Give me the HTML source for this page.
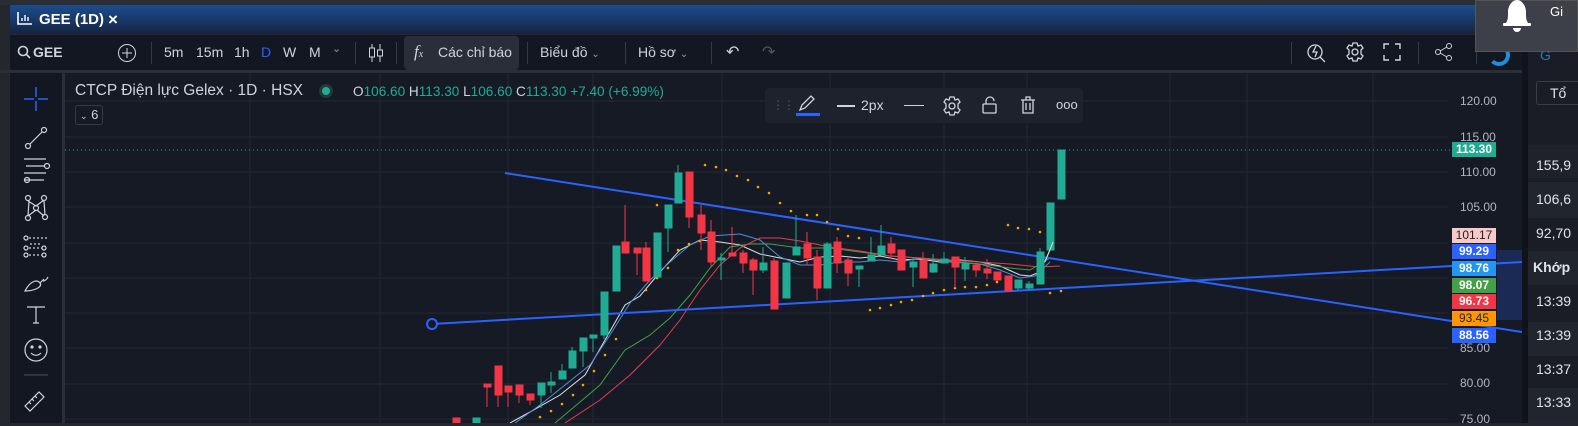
<!DOCTYPE html>
<html><head><meta charset="utf-8">
<style>
*{margin:0;padding:0;box-sizing:border-box}
body{width:1578px;height:423px;overflow:hidden;background:#24272e;font-family:"Liberation Sans","Noto Sans CJK SC",sans-serif;position:relative;color:#d1d4dc}
.abs{position:absolute}
.tb{font-size:14px;color:#d1d4dc;white-space:nowrap}
.sep{position:absolute;top:42px;width:1px;height:22px;background:#363a45}
.pl{position:absolute;left:1452px;width:44px;height:15px;font-size:12px;text-align:center;line-height:15px;color:#fff;font-weight:bold}
.ax{position:absolute;left:1460px;font-size:12px;color:#b2b5be}
.rp{position:absolute;left:1528px;width:50px;font-size:14px;color:#e0e3eb;padding-left:8px}
</style></head><body>
<!-- top strip -->
<div class="abs" style="left:0;top:0;width:1578px;height:5px;background:#2a2d33"></div>
<div class="abs" style="left:10px;top:5px;width:1512px;height:29px;background:linear-gradient(#1c4d8e,#17305a 70%,#15233d)"></div>
<svg class="abs" style="left:17px;top:11px" width="16" height="14"><path d="M1 1v12h14" fill="none" stroke="#fff" stroke-width="1.6"/><path d="M5 10V7M8 10V4M11 10V6" stroke="#fff" stroke-width="1.4"/></svg>
<div class="abs" style="left:39px;top:11px;font-size:15px;font-weight:bold;color:#fff">GEE (1D)</div>
<div class="abs" style="left:108px;top:10px;font-size:17px;font-weight:bold;color:#fff">×</div>
<!-- toolbar -->
<div class="abs" style="left:10px;top:35px;width:1512px;height:35px;background:#131722"></div>
<div class="abs" style="left:0;top:70px;width:1522px;height:3px;background:#2a2e39"></div>
<svg class="abs" style="left:17px;top:45px" width="14" height="14"><circle cx="6" cy="6" r="4.5" fill="none" stroke="#d1d4dc" stroke-width="1.6"/><line x1="9.5" y1="9.5" x2="13" y2="13" stroke="#d1d4dc" stroke-width="1.6"/></svg>
<div class="abs tb" style="left:33px;top:44px;font-weight:bold">GEE</div>
<svg class="abs" style="left:117px;top:43px" width="20" height="20"><circle cx="10" cy="10" r="8.5" fill="none" stroke="#d1d4dc"/><path d="M10 5v10M5 10h10" stroke="#d1d4dc"/></svg>
<div class="sep" style="left:151px"></div>
<div class="abs tb" style="left:164px;top:44px">5m</div>
<div class="abs tb" style="left:196px;top:44px">15m</div>
<div class="abs tb" style="left:234px;top:44px">1h</div>
<div class="abs tb" style="left:261px;top:44px;color:#2962ff">D</div>
<div class="abs tb" style="left:283px;top:44px">W</div>
<div class="abs tb" style="left:309px;top:44px">M</div>
<div class="abs tb" style="left:332px;top:42px;font-size:11px;color:#999">&#8964;</div>
<div class="sep" style="left:355px"></div>
<svg class="abs" style="left:366px;top:42px" width="20" height="22"><path d="M6 2v18M14 2v18" stroke="#d1d4dc"/><rect x="3.5" y="6" width="5" height="9" fill="#131722" stroke="#d1d4dc"/><rect x="11.5" y="8" width="5" height="6" fill="#131722" stroke="#d1d4dc"/></svg>
<div class="sep" style="left:396px"></div>
<div class="abs" style="left:404px;top:36px;width:115px;height:34px;background:#2a2e39;border-radius:4px"></div>
<div class="abs tb" style="left:414px;top:42px;font-family:'Liberation Serif',serif;font-style:italic;font-size:17px">f<span style="font-size:10px">x</span></div>
<div class="abs tb" style="left:438px;top:44px">Các chỉ báo</div>
<div class="sep" style="left:527px"></div>
<div class="abs tb" style="left:540px;top:44px">Biểu đồ <span style="font-size:10px;color:#999">&#8964;</span></div>
<div class="sep" style="left:625px"></div>
<div class="abs tb" style="left:638px;top:44px">Hồ sơ <span style="font-size:10px;color:#999">&#8964;</span></div>
<div class="sep" style="left:711px"></div>
<div class="abs tb" style="left:726px;top:42px;font-size:16px">&#8630;</div>
<div class="abs tb" style="left:762px;top:42px;font-size:16px;color:#555">&#8631;</div>
<div class="sep" style="left:1291px"></div>
<svg class="abs" style="left:1305px;top:41px" width="22" height="24"><circle cx="10" cy="11" r="7" fill="none" stroke="#d1d4dc" stroke-width="1.3"/><path d="M15 16l5 5M11 5l-3 6h4l-2 5" stroke="#d1d4dc" stroke-width="1.3" fill="none"/></svg>
<svg class="abs" style="left:1344px;top:41px" width="22" height="22"><circle cx="11" cy="11" r="3" fill="none" stroke="#d1d4dc" stroke-width="1.3"/><path d="M9 2h4l1 3 3-1 2 3-2 2v4l2 2-2 3-3-1-1 3h-4l-1-3-3 1-2-3 2-2v-4l-2-2 2-3 3 1z" fill="none" stroke="#d1d4dc" stroke-width="1.3"/></svg>
<svg class="abs" style="left:1383px;top:43px" width="18" height="18"><path d="M1 6V1h5M12 1h5v5M17 12v5h-5M6 17H1v-5" fill="none" stroke="#d1d4dc" stroke-width="1.4"/></svg>
<div class="sep" style="left:1418px"></div>
<svg class="abs" style="left:1434px;top:42px" width="20" height="20"><circle cx="15" cy="4" r="2.5" fill="none" stroke="#d1d4dc"/><circle cx="4" cy="10" r="2.5" fill="none" stroke="#d1d4dc"/><circle cx="15" cy="16" r="2.5" fill="none" stroke="#d1d4dc"/><path d="M6 9l7-4M6 11l7 4" stroke="#d1d4dc"/></svg>
<div class="sep" style="left:1476px"></div>
<div class="abs" style="left:1488px;top:44px;width:22px;height:22px;border-radius:50%;border:4px solid #1f8ee0;border-left-color:transparent"></div>
<!-- left toolbar -->
<div class="abs" style="left:10px;top:73px;width:52px;height:350px;background:#131722"></div>
<div class="abs" style="left:62px;top:73px;width:3px;height:350px;background:#2a2e39"></div>
<svg class="abs" style="left:10px;top:73px" width="52" height="350" fill="none" stroke="#d1d4dc" stroke-width="1.2">
<path d="M26 14v10M26 28v10M14 26h10M28 26h10" stroke="#2962ff" stroke-width="1.5"/>
<circle cx="18" cy="73" r="2.5"/><circle cx="34" cy="57" r="2.5"/><path d="M20 71l12-12"/>
<path d="M14 86h22M16 93h18M14 100h22M14 107h20"/><circle cx="37" cy="93" r="2.5"/><circle cx="17" cy="107" r="2.5"/>
<circle cx="18" cy="125" r="2.5"/><circle cx="34" cy="125" r="2.5"/><circle cx="26" cy="135" r="2.5"/><circle cx="18" cy="145" r="2.5"/><circle cx="35" cy="144" r="2.5"/><path d="M18 128l8 5 8-6M26 137l-8 6M27 137l7 6M19 128l-1 15M34 128l1 14"/>
<circle cx="16" cy="165" r="2"/><circle cx="16" cy="175" r="2"/><circle cx="16" cy="182" r="2"/><circle cx="34" cy="175" r="2"/><circle cx="34" cy="182" r="2"/><path d="M19 165h18M19 175h13M19 182h13M20 171h12" stroke-dasharray="2 2"/>
<path d="M15 218c5-10 12-12 15-8s-6 8-15 8zM30 210l4-4M33 208c2 0 4-2 5-4"/>
<path d="M17 234h18M26 234v16M23 250h6"/>
<circle cx="26" cy="277" r="11"/><circle cx="22" cy="274" r="1" fill="#d1d4dc"/><circle cx="30" cy="274" r="1" fill="#d1d4dc"/><path d="M21 280c3 3 7 3 10 0"/>
<path d="M14 302h24" stroke="#434651"/>
<path d="M15 333l14-14 5 5-14 14zM19 329l2 2M22 326l2 2M25 323l2 2"/>
</svg>
<!-- chart -->
<div class="abs" style="left:65px;top:73px;width:1457px;height:350px;background:#161a25"></div>
<div class="abs" style="left:1522px;top:35px;width:6px;height:388px;background:#101318"></div>
<svg class="abs" style="left:0;top:0" width="1522" height="423">
<g stroke="#242832" stroke-width="1">
<path d="M65 101H1448M65 137H1448M65 172H1448M65 207H1448M65 243H1448M65 278H1448M65 313H1448M65 348H1448M65 384H1448M65 419H1448"/>
<path d="M250 73V423M380 73V423M508 73V423M593 73V423M722 73V423M830 73V423M944 73V423M1027 73V423M1170 73V423M1247 73V423M1373 73V423"/>
</g>
<rect x="1497" y="250" width="25" height="70" fill="#1a2a55"/>
<line x1="65" y1="150" x2="1452" y2="150" stroke="#22ab94" stroke-dasharray="1 3"/>
<polyline fill="none" stroke="#e0e0e0" stroke-width="1" points="510,423 530,412 560,395 585,375 605,340 625,305 640,296 660,272 680,250 700,240 720,242 740,245 760,254 780,258 800,262 820,257 840,256 860,258 880,256 900,260 920,259 940,262 960,260 980,262 1000,266 1020,275 1030,276 1040,272 1050,250"/>
<polyline fill="none" stroke="#4f8fd6" stroke-width="1" points="515,423 540,405 565,385 590,365 610,335 630,303 650,280 670,262 690,245 710,236 740,234 760,240 780,257 800,265 820,265 840,262 860,262 880,260 900,262 920,258 950,262 980,264 1000,270 1020,278 1035,276 1050,262"/>
<polyline fill="none" stroke="#43a047" stroke-width="1" points="555,423 580,402 600,385 625,350 650,335 670,318 690,295 710,268 730,247 750,244 770,244 800,248 830,248 860,252 890,256 920,258 950,261 980,264 1010,268 1030,270 1050,258"/>
<polyline fill="none" stroke="#e04050" stroke-width="1" points="565,423 600,400 630,375 660,345 680,320 700,290 720,265 740,248 760,238 780,238 800,241 830,247 860,251 890,256 920,258 950,260 980,262 1010,264 1040,267 1060,266"/>
<line x1="505" y1="173" x2="1522" y2="332" stroke="#2962ff" stroke-width="2"/>
<line x1="432" y1="324" x2="1522" y2="262" stroke="#2962ff" stroke-width="2"/>
<circle cx="432" cy="324" r="5" fill="#161a25" stroke="#2962ff" stroke-width="2"/>
<g fill="#f7a600">
<circle cx="540" cy="417" r="1.3"/><circle cx="551" cy="411" r="1.3"/><circle cx="562" cy="404" r="1.3"/><circle cx="573" cy="395" r="1.3"/><circle cx="583" cy="385" r="1.3"/><circle cx="594" cy="371" r="1.3"/><circle cx="605" cy="355" r="1.3"/><circle cx="616" cy="339" r="1.3"/><circle cx="646" cy="290" r="1.3"/><circle cx="657" cy="278" r="1.3"/><circle cx="668" cy="268" r="1.3"/><circle cx="678" cy="250" r="1.3"/><circle cx="689" cy="244" r="1.3"/><circle cx="700" cy="241" r="1.3"/><circle cx="710" cy="236" r="1.3"/><circle cx="657" cy="205" r="1.3"/>
<circle cx="705" cy="165" r="1.3"/><circle cx="716" cy="167" r="1.3"/><circle cx="726" cy="170" r="1.3"/><circle cx="737" cy="176" r="1.3"/><circle cx="748" cy="180" r="1.3"/><circle cx="758" cy="187" r="1.3"/><circle cx="769" cy="193" r="1.3"/><circle cx="780" cy="203" r="1.3"/><circle cx="791" cy="211" r="1.3"/><circle cx="807" cy="215" r="1.3"/><circle cx="817" cy="215" r="1.3"/><circle cx="827" cy="222" r="1.3"/><circle cx="838" cy="229" r="1.3"/><circle cx="848" cy="236" r="1.3"/><circle cx="859" cy="238" r="1.3"/>
<circle cx="870" cy="310" r="1.3"/><circle cx="880" cy="308" r="1.3"/><circle cx="891" cy="305" r="1.3"/><circle cx="901" cy="302" r="1.3"/><circle cx="912" cy="300" r="1.3"/><circle cx="923" cy="296" r="1.3"/><circle cx="933" cy="293" r="1.3"/><circle cx="944" cy="290" r="1.3"/><circle cx="955" cy="288" r="1.3"/><circle cx="965" cy="287" r="1.3"/><circle cx="976" cy="287" r="1.3"/><circle cx="987" cy="285" r="1.3"/><circle cx="997" cy="282" r="1.3"/>
<circle cx="1008" cy="225" r="1.3"/><circle cx="1018" cy="228" r="1.3"/><circle cx="1029" cy="229" r="1.3"/><circle cx="1040" cy="232" r="1.3"/><circle cx="1050" cy="293" r="1.3"/><circle cx="1061" cy="291" r="1.3"/>
</g>
<g stroke-width="1">
<g fill="#f23645" stroke="#f23645">
<rect x="453" y="418" width="7" height="5"/>
<line x1="487" y1="384" x2="487" y2="407"/><rect x="484" y="384" width="7" height="3"/>
<line x1="498" y1="366" x2="498" y2="407"/><rect x="495" y="366" width="7" height="29"/>
<line x1="508" y1="386" x2="508" y2="407"/><rect x="505" y="386" width="7" height="6"/>
<line x1="519" y1="385" x2="519" y2="403"/><rect x="516" y="385" width="7" height="10"/>
<line x1="530" y1="394" x2="530" y2="405"/><rect x="527" y="394" width="7" height="6"/>
<line x1="625" y1="205" x2="625" y2="253"/><rect x="622" y="242" width="7" height="11"/>
<line x1="637" y1="248" x2="637" y2="275"/><rect x="634" y="248" width="7" height="5"/>
<line x1="646" y1="242" x2="646" y2="281"/><rect x="643" y="248" width="7" height="33"/>
<line x1="689" y1="172" x2="689" y2="228"/><rect x="686" y="172" width="7" height="45"/>
<line x1="701" y1="205" x2="701" y2="250"/><rect x="698" y="215" width="7" height="18"/>
<line x1="711" y1="220" x2="711" y2="267"/><rect x="708" y="232" width="7" height="30"/>
<line x1="732" y1="227" x2="732" y2="256"/><rect x="729" y="253" width="7" height="3"/>
<line x1="743" y1="250" x2="743" y2="273"/><rect x="740" y="253" width="7" height="10"/>
<line x1="753" y1="258" x2="753" y2="295"/><rect x="750" y="260" width="7" height="10"/>
<line x1="774" y1="258" x2="774" y2="309"/><rect x="771" y="261" width="7" height="48"/>
<line x1="807" y1="232" x2="807" y2="265"/><rect x="804" y="244" width="7" height="14"/>
<line x1="817" y1="250" x2="817" y2="300"/><rect x="814" y="257" width="7" height="31"/>
<line x1="837" y1="237" x2="837" y2="273"/><rect x="834" y="242" width="7" height="21"/>
<line x1="848" y1="258" x2="848" y2="286"/><rect x="845" y="260" width="7" height="13"/>
<line x1="891" y1="237" x2="891" y2="259"/><rect x="888" y="244" width="7" height="9"/>
<line x1="901" y1="250" x2="901" y2="270"/><rect x="898" y="250" width="7" height="20"/>
<line x1="923" y1="252" x2="923" y2="278"/><rect x="920" y="260" width="7" height="18"/>
<line x1="955" y1="257" x2="955" y2="288"/><rect x="952" y="257" width="7" height="10"/>
<line x1="976" y1="265" x2="976" y2="277"/><rect x="973" y="265" width="7" height="5"/>
<line x1="987" y1="259" x2="987" y2="279"/><rect x="984" y="269" width="7" height="4"/>
<line x1="997" y1="272" x2="997" y2="280"/><rect x="994" y="272" width="7" height="8"/>
<line x1="1008" y1="276" x2="1008" y2="291"/><rect x="1005" y="276" width="7" height="15"/>
</g>
<g fill="#22ab94" stroke="#22ab94">
<rect x="473" y="418" width="7" height="5"/>
<line x1="541" y1="383" x2="541" y2="408"/><rect x="538" y="383" width="7" height="12"/>
<line x1="551" y1="372" x2="551" y2="393"/><rect x="548" y="382" width="7" height="3"/>
<line x1="562" y1="364" x2="562" y2="379"/><rect x="559" y="371" width="7" height="8"/>
<line x1="572" y1="347" x2="572" y2="368"/><rect x="569" y="351" width="7" height="17"/>
<line x1="583" y1="338" x2="583" y2="367"/><rect x="580" y="338" width="7" height="13"/>
<line x1="593" y1="335" x2="593" y2="352"/><rect x="590" y="335" width="7" height="3"/>
<line x1="604" y1="292" x2="604" y2="339"/><rect x="601" y="292" width="7" height="43"/>
<line x1="616" y1="246" x2="616" y2="291"/><rect x="613" y="246" width="7" height="45"/>
<line x1="657" y1="233" x2="657" y2="277"/><rect x="654" y="233" width="7" height="44"/>
<line x1="668" y1="205" x2="668" y2="252"/><rect x="665" y="205" width="7" height="23"/>
<line x1="678" y1="165" x2="678" y2="203"/><rect x="675" y="173" width="7" height="30"/>
<line x1="721" y1="253" x2="721" y2="280"/><rect x="718" y="258" width="7" height="2"/>
<line x1="763" y1="247" x2="763" y2="273"/><rect x="760" y="263" width="7" height="7"/>
<line x1="786" y1="263" x2="786" y2="298"/><rect x="783" y="263" width="7" height="35"/>
<line x1="796" y1="215" x2="796" y2="255"/><rect x="793" y="247" width="7" height="8"/>
<line x1="827" y1="242" x2="827" y2="288"/><rect x="824" y="244" width="7" height="44"/>
<line x1="859" y1="266" x2="859" y2="287"/><rect x="856" y="266" width="7" height="3"/>
<line x1="871" y1="237" x2="871" y2="261"/><rect x="868" y="255" width="7" height="6"/>
<line x1="881" y1="225" x2="881" y2="255"/><rect x="878" y="246" width="7" height="9"/>
<line x1="913" y1="257" x2="913" y2="287"/><rect x="910" y="262" width="7" height="5"/>
<line x1="933" y1="254" x2="933" y2="273"/><rect x="930" y="264" width="7" height="8"/>
<line x1="944" y1="252" x2="944" y2="263"/><rect x="941" y="259" width="7" height="4"/>
<line x1="965" y1="257" x2="965" y2="281"/><rect x="962" y="264" width="7" height="5"/>
<line x1="1018" y1="280" x2="1018" y2="290"/><rect x="1015" y="280" width="7" height="8"/>
<line x1="1029" y1="281" x2="1029" y2="290"/><rect x="1026" y="284" width="7" height="4"/>
<line x1="1040" y1="248" x2="1040" y2="284"/><rect x="1037" y="252" width="7" height="32"/>
<rect x="1047" y="203" width="7" height="47"/>
<rect x="1058" y="150" width="7" height="49"/>
</g>
<polyline fill="none" stroke="#e0e0e0" points="1045,262 1053,242"/>
</g>
</svg>
<!-- legend -->
<div class="abs" style="left:75px;top:82px;font-size:15.5px;color:#d1d4dc">CTCP Điện lực Gelex · 1D · HSX</div>
<div class="abs" style="left:322px;top:87px;width:8px;height:8px;border-radius:50%;background:#22ab94;box-shadow:0 0 0 3px #1f3b36"></div>
<div class="abs" style="left:353px;top:84px;font-size:13.6px;color:#d1d4dc">O<span style="color:#22ab94">106.60</span> H<span style="color:#22ab94">113.30</span> L<span style="color:#22ab94">106.60</span> C<span style="color:#22ab94">113.30</span> <span style="color:#22ab94">+7.40 (+6.99%)</span></div>
<div class="abs" style="left:75px;top:105px;width:28px;height:20px;border:1px solid #363a45;border-radius:3px;font-size:13px;line-height:18px;padding-left:4px;color:#d1d4dc"><span style="font-size:9px">&#8964;</span> 6</div>
<!-- floating drawing toolbar -->
<div class="abs" style="left:765px;top:88px;width:318px;height:35px;background:#1e222d;border-radius:4px"></div>
<div class="abs" style="left:772px;top:98px;font-size:12px;color:#555;letter-spacing:-1px">⋮⋮</div>
<svg class="abs" style="left:796px;top:93px" width="24" height="24"><path d="M4 17l2-5 9-9 3 3-9 9z" fill="none" stroke="#d1d4dc" stroke-width="1.3"/><rect x="0" y="20" width="24" height="3" fill="#2962ff"/></svg>
<div class="abs" style="left:837px;top:105px;width:18px;height:2px;background:#d1d4dc"></div>
<div class="abs" style="left:861px;top:97px;font-size:14px;color:#d1d4dc">2px</div>
<div class="abs" style="left:904px;top:105px;width:20px;height:1px;background:#d1d4dc"></div>
<svg class="abs" style="left:942px;top:96px" width="20" height="20"><circle cx="10" cy="10" r="3" fill="none" stroke="#d1d4dc" stroke-width="1.3"/><path d="M8 1h4l1 3 3-1 2 3-2 2v4l2 2-2 3-3-1-1 3h-4l-1-3-3 1-2-3 2-2v-4l-2-2 2-3 3 1z" fill="none" stroke="#d1d4dc" stroke-width="1.3"/></svg>
<svg class="abs" style="left:980px;top:95px" width="20" height="20"><rect x="3" y="9" width="13" height="9" rx="1" fill="none" stroke="#d1d4dc" stroke-width="1.3"/><path d="M6 9V6a4 4 0 0 1 8 0" fill="none" stroke="#d1d4dc" stroke-width="1.3"/></svg>
<svg class="abs" style="left:1018px;top:95px" width="20" height="20"><path d="M3 5h14M8 5V2h4v3M5 5v13h10V5M8 8v7M12 8v7" fill="none" stroke="#d1d4dc" stroke-width="1.3"/></svg>
<div class="abs" style="left:1056px;top:97px;font-size:13px;color:#d1d4dc">ooo</div>
<!-- axis -->
<div class="ax" style="top:94px">120.00</div>
<div class="ax" style="top:130px">115.00</div>
<div class="ax" style="top:165px">110.00</div>
<div class="ax" style="top:200px">105.00</div>
<div class="ax" style="top:341px">85.00</div>
<div class="ax" style="top:376px">80.00</div>
<div class="ax" style="top:412px">75.00</div>
<div class="pl" style="top:142px;background:#22ab94">113.30</div>
<div class="pl" style="top:228px;background:#f8c9c9;color:#222;font-weight:normal">101.17</div>
<div class="pl" style="top:244px;background:#2962ff">99.29</div>
<div class="pl" style="top:261px;background:#2196f3">98.76</div>
<div class="pl" style="top:278px;background:#43a047">98.07</div>
<div class="pl" style="top:294px;background:#f23645">96.73</div>
<div class="pl" style="top:311px;background:#ff9800;color:#222;font-weight:normal">93.45</div>
<div class="pl" style="top:328px;background:#2962ff">88.56</div>
<!-- right panel -->
<div class="abs" style="left:1528px;top:35px;width:50px;height:388px;background:#1a1d26"></div>
<div class="abs" style="left:1528px;top:145px;width:50px;height:33px;background:#1f222b"></div>
<div class="abs" style="left:1528px;top:182px;width:50px;height:36px;background:#21252e"></div>
<div class="abs" style="left:1528px;top:251px;width:50px;height:34px;background:#21252e"></div>
<div class="abs" style="left:1528px;top:322px;width:50px;height:34px;background:#21252e"></div>
<div class="abs" style="left:1528px;top:388px;width:50px;height:35px;background:#21252e"></div>
<div class="abs" style="left:1536px;top:81px;width:42px;height:24px;border:1px solid #3a3e48;border-right:none;border-radius:3px 0 0 3px;font-size:14px;padding:3px 0 0 13px;color:#e0e3eb">Tổ</div>
<div class="rp" style="top:157px">155,9</div>
<div class="rp" style="top:191px">106,6</div>
<div class="rp" style="top:225px">92,70</div>
<div class="rp" style="top:259px;font-weight:bold;padding-left:5px">Khớp</div>
<div class="rp" style="top:293px">13:39</div>
<div class="rp" style="top:327px">13:39</div>
<div class="rp" style="top:361px">13:37</div>
<div class="rp" style="top:394px">13:33</div>
<div class="abs" style="left:1540px;top:47px;font-size:14px;color:#2a7ab8">G</div>
<!-- notification -->
<div class="abs" style="left:1475px;top:0;width:103px;height:52px;background:#3d4048;border:1px solid #555"></div>
<svg class="abs" style="left:1500px;top:0" width="34" height="36"><path d="M5 24c3-3 3-6 3-12 0-6 4-12 9-12s9 6 9 12c0 6 0 9 3 12z" fill="#fff"/><rect x="3" y="23" width="28" height="3" rx="1" fill="#fff"/><path d="M13 28h8a4 4 0 0 1-8 0z" fill="#fff"/></svg>
<div class="abs" style="left:1550px;top:4px;font-size:13px;color:#fff">Gi</div>
</body></html>
